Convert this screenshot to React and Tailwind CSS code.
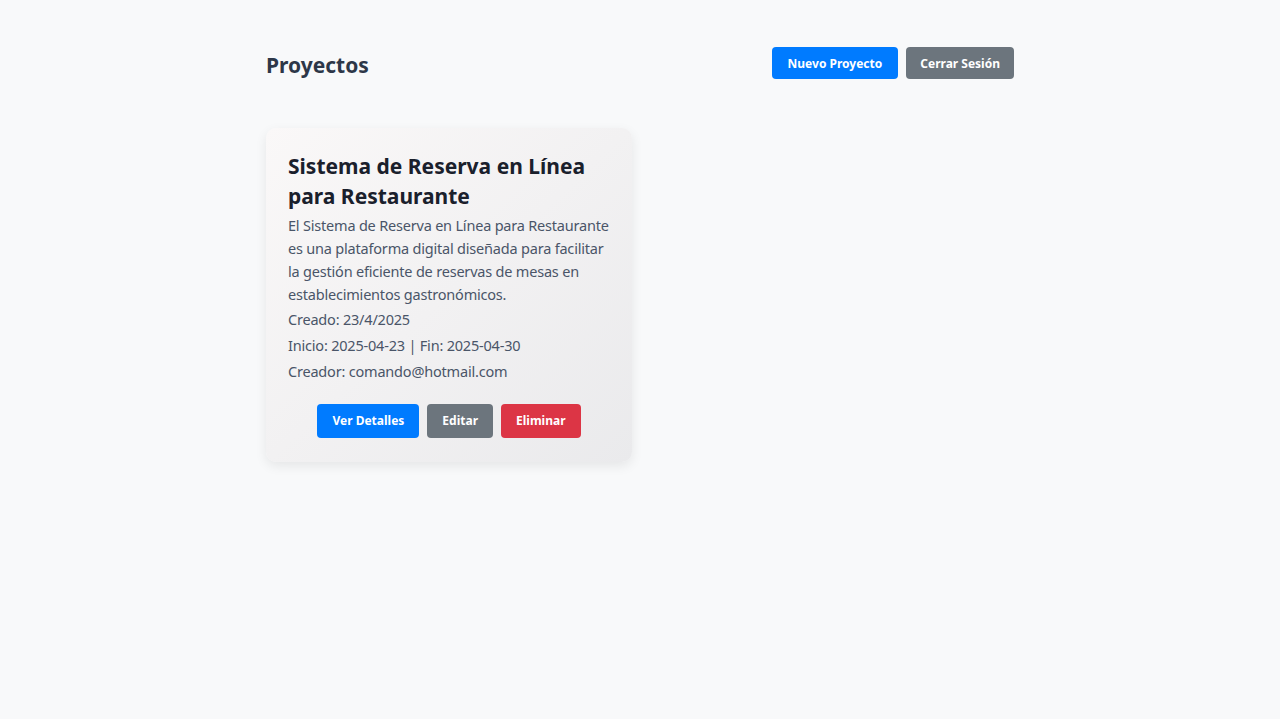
export default function App() {
  const font = { fontFamily: '"Noto Sans", "Open Sans", sans-serif' };
  return (
    <div className="min-h-[719px] bg-[#f8f9fa]" style={font}>
      <div className="w-[748px] mx-auto pt-[47px]">
        <div className="flex items-center justify-between h-8">
          <h1 className="text-[21px] font-bold text-[#2d3748] translate-y-[3px]">Proyectos</h1>
          <div className="flex gap-2">
            <button className="h-8 px-4 rounded bg-[#007bff] text-white text-[12px] font-bold pt-[1px]">Nuevo Proyecto</button>
            <button className="h-8 px-[14px] rounded bg-[#6c757d] text-white text-[12px] font-bold pt-[1px]">Cerrar Sesión</button>
          </div>
        </div>
        <div className="mt-[49px] w-[366px] rounded-[10px] bg-gradient-to-br from-[#faf8f8] to-[#eaeaec] shadow-[0_4px_12px_rgba(0,0,0,0.08)] px-[22px] pt-[23px] pb-[24px]">
          <h2 className="text-[21px] leading-[30px] font-bold text-[#1a202c]">Sistema de Reserva en Línea para Restaurante</h2>
          <div className="text-[14.5px] leading-[23px] tracking-[-0.2px] text-[#4a5568]">
            <p className="mt-[3px]">El Sistema de Reserva en Línea para Restaurante es una plataforma digital diseñada para facilitar la gestión eficiente de reservas de mesas en establecimientos gastronómicos.</p>
            <p className="mt-[2px]">Creado: 23/4/2025</p>
            <p className="mt-[3px]">Inicio: 2025-04-23 | Fin: 2025-04-30</p>
            <p className="mt-[3px]">Creador: comando@hotmail.com</p>
          </div>
          <div className="mt-[21px] flex justify-center gap-2">
            <button className="h-[34px] px-[15px] rounded bg-[#007bff] text-white text-[12px] font-bold">Ver Detalles</button>
            <button className="h-[34px] px-[15px] rounded bg-[#6c757d] text-white text-[12px] font-bold">Editar</button>
            <button className="h-[34px] px-[15px] rounded bg-[#dc3545] text-white text-[12px] font-bold">Eliminar</button>
          </div>
        </div>
      </div>
    </div>
  );
}
